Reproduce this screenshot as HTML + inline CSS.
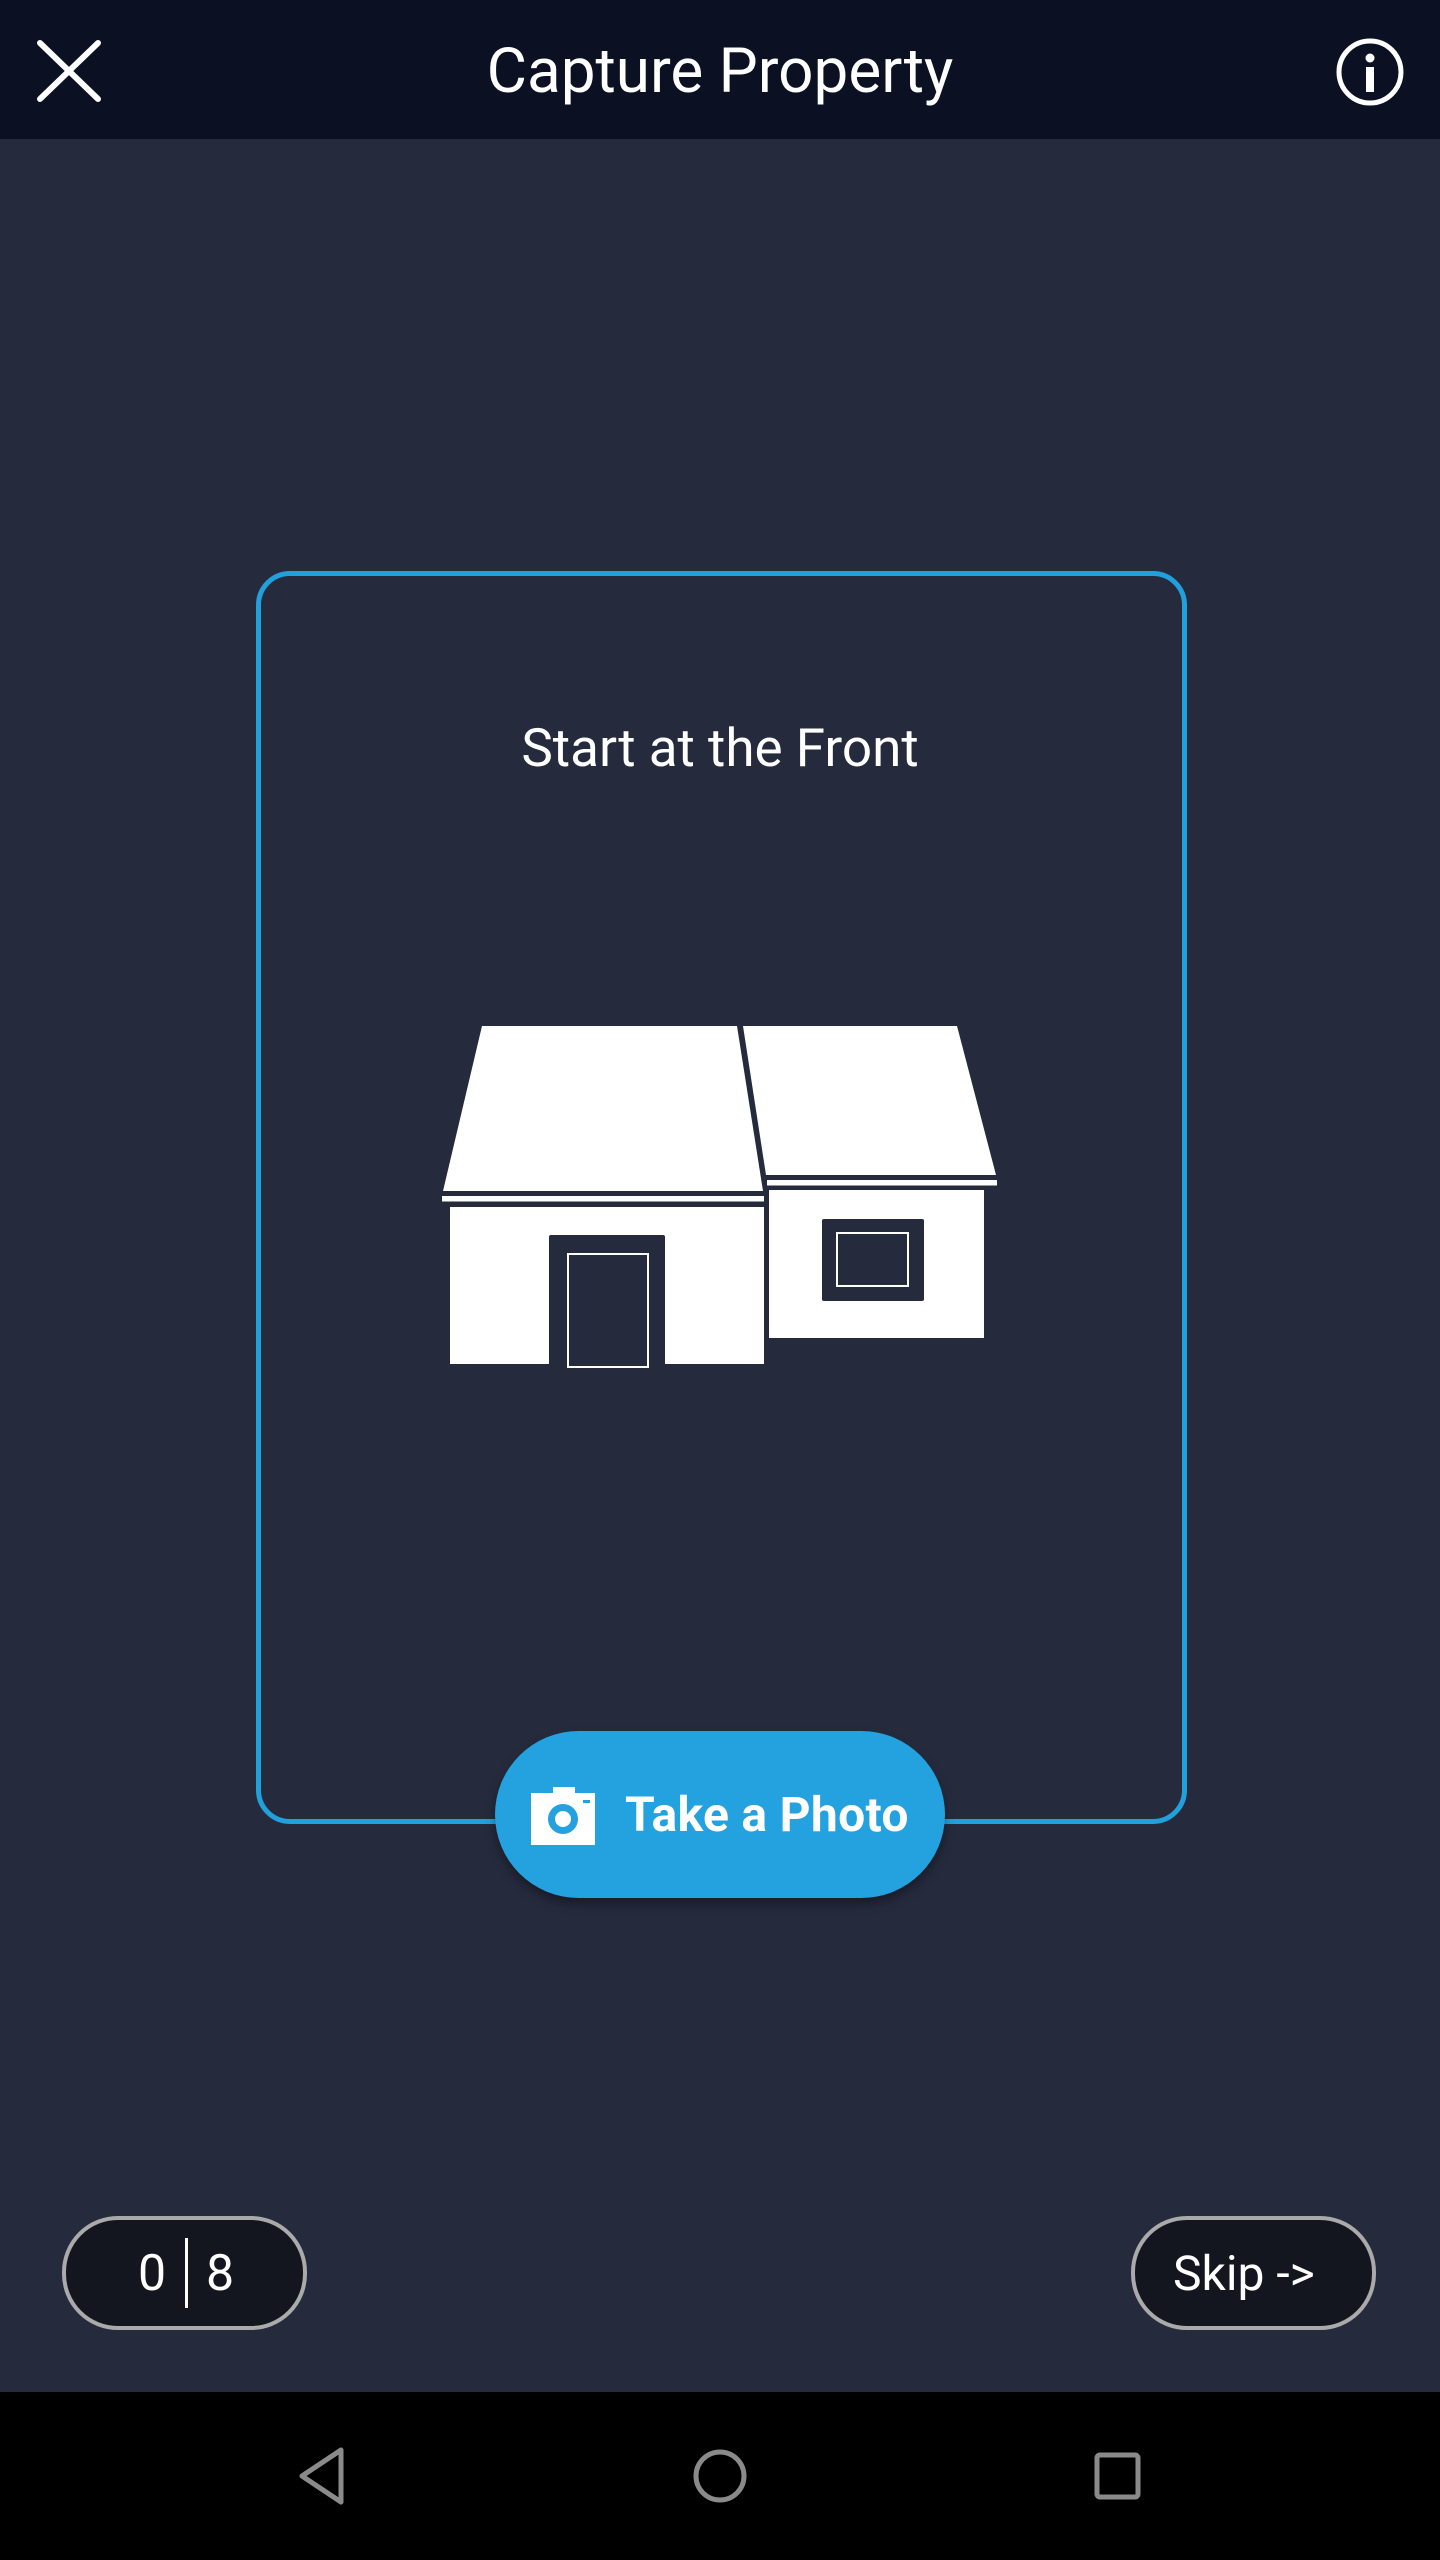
<!DOCTYPE html>
<html><head><meta charset="utf-8"><style>
html,body{margin:0;padding:0}
body{width:1440px;height:2560px;background:#252a3d;position:relative;overflow:hidden;font-family:"Roboto","Liberation Sans",sans-serif;color:#fff}
.hdr{position:absolute;left:0;top:0;width:1440px;height:139px;background:#0b1122}
.title{position:absolute;left:0;width:1440px;top:36px;text-align:center;font-size:62px;line-height:72px}
.frame{position:absolute;left:256px;top:571px;width:921px;height:1243px;border:5px solid #22a0dc;border-radius:34px}
.start{position:absolute;left:0;width:1440px;top:717px;text-align:center;font-size:53px;line-height:62px}
.btn{position:absolute;left:495px;top:1731px;width:450px;height:167px;border-radius:84px;background:#23a2df;box-shadow:0 6px 10px rgba(0,0,0,.35)}
.btn span{position:absolute;left:130px;top:54px;font-size:48px;font-weight:bold;line-height:60px;letter-spacing:0.3px}
.pill{position:absolute;top:2216px;width:237px;height:106px;border:4px solid #aaa;border-radius:56px;background:#13161f;font-size:50px}
.nav{position:absolute;left:0;top:2392px;width:1440px;height:168px;background:#000}
</style></head><body>
<div class="hdr">
<svg style="position:absolute;left:36px;top:39px" width="66" height="64"><path d="M4 4L62 60M62 4L4 60" stroke="#fff" stroke-width="6" stroke-linecap="round"/></svg>
<div class="title">Capture Property</div>
<svg style="position:absolute;left:1334px;top:36px" width="72" height="72"><circle cx="36" cy="36" r="31" fill="none" stroke="#fff" stroke-width="5"/><circle cx="36" cy="22" r="4.5" fill="#fff"/><rect x="32" y="31" width="8" height="25" fill="#fff"/></svg>
</div>
<div class="frame"></div>
<div class="start">Start at the Front</div>
<svg style="position:absolute;left:0;top:0" width="1440" height="1400">
<polygon points="482,1026 737,1026 763,1191 443,1191" fill="#fff"/>
<rect x="442" y="1196" width="322" height="5.5" fill="#fff"/>
<rect x="450" y="1207" width="314" height="157" fill="#fff"/>
<rect x="549" y="1235" width="116" height="140" rx="2" fill="#252a3d"/>
<rect x="568" y="1254" width="80" height="113" fill="none" stroke="#fff" stroke-width="2"/>
<polygon points="743,1026 957,1026 996,1175 766,1175" fill="#fff"/>
<rect x="767" y="1180" width="230" height="5.5" fill="#fff"/>
<rect x="769" y="1190" width="215" height="148" fill="#fff"/>
<rect x="822" y="1219" width="102" height="82" rx="2" fill="#252a3d"/>
<rect x="837" y="1233" width="71" height="53" fill="none" stroke="#fff" stroke-width="2"/>
</svg>
<div class="btn">
<svg style="position:absolute;left:36px;top:56px" width="64" height="58"><path d="M22 0h22v6h20v52H0V6h22z" fill="#fff"/><circle cx="32" cy="32" r="15" fill="#23a2df"/><circle cx="32" cy="32" r="8" fill="#fff"/><rect x="52" y="13" width="7" height="3" fill="#23a2df"/></svg>
<span>Take a Photo</span>
</div>
<div class="pill" style="left:62px">
<span style="position:absolute;left:72px;top:22px;line-height:64px">0</span>
<div style="position:absolute;left:119px;top:18px;width:3px;height:70px;background:#fff"></div>
<span style="position:absolute;left:140px;top:22px;line-height:64px">8</span>
</div>
<div class="pill" style="left:1131px"><span style="position:absolute;left:38px;top:22px;line-height:64px;font-size:48px">Skip -&gt;</span></div>
<div class="nav">
<svg style="position:absolute;left:0;top:0" width="1440" height="168">
<path d="M341 58L302 84L341 110Z" fill="none" stroke="#8a8a8a" stroke-width="5" stroke-linejoin="round"/>
<circle cx="720" cy="84" r="24" fill="none" stroke="#8a8a8a" stroke-width="5"/>
<rect x="1097" y="63" width="41" height="42" rx="3" fill="none" stroke="#8a8a8a" stroke-width="5"/>
</svg>
</div>
</body></html>
